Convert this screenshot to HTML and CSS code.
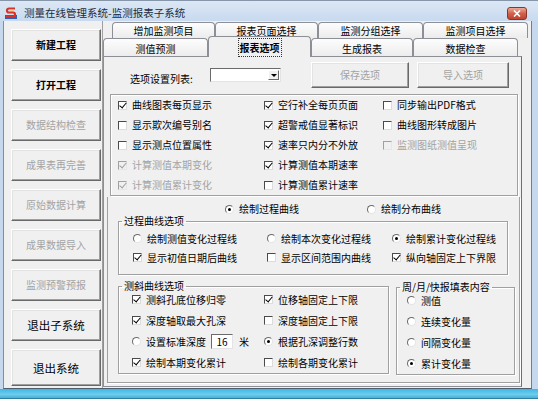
FILE: index.html
```html
<!DOCTYPE html>
<html lang="zh-CN">
<head>
  <meta charset="UTF-8" />
  <title>测量在线管理系统-监测报表子系统</title>
  <link rel="stylesheet" href="styles.css">
</head>
<body>
  <div class="window">
    <div class="titlebar">
      <svg class="appicon" width="12" height="12" viewBox="0 0 12 12">
        <rect x="0" y="8" width="12" height="4" fill="#2f5fb8"/>
        <path d="M10 1.5H4a2 2 0 0 0 0 4h4a2 2 0 0 1 0 4H1" fill="none" stroke="#d8322a" stroke-width="2.2"/>
        <path d="M9 3H4.5" stroke="#f4c430" stroke-width="1"/>
      </svg>
      <span class="title">测量在线管理系统-监测报表子系统</span>
      <span class="close">
        <svg width="8" height="7" viewBox="0 0 8 7"><path d="M1 0.5l6 6M7 0.5l-6 6" stroke="#fff" stroke-width="1.6"/></svg>
      </span>
    </div>

    <div class="frame">
      <div class="client">
        <!-- 左侧功能按钮 -->
        <div class="side">
          <button class="btn strong">新建工程</button>
          <button class="btn strong">打开工程</button>
          <button class="btn" disabled>数据结构检查</button>
          <button class="btn" disabled>成果表再完善</button>
          <button class="btn" disabled>原始数据计算</button>
          <button class="btn" disabled>成果数据导入</button>
          <button class="btn" disabled>监测预警预报</button>
          <button class="btn big">退出子系统</button>
          <button class="btn big last">退出系统</button>
        </div>

        <!-- 选项卡 -->
        <div class="tabctl">
          <div class="tabrow back">
            <div class="tab w103">增加监测项目</div>
            <div class="tab w103">报表页面选择</div>
            <div class="tab w105">监测分组选择</div>
            <div class="tab w105">监测项目选择</div>
          </div>
          <div class="tabrow front">
            <div class="tab w105">测值预测</div>
            <div class="tab w103 sel"><span class="focus">报表选项</span></div>
            <div class="tab w102">生成报表</div>
            <div class="tab w105">数据检查</div>
          </div>

          <div class="page">
            <div class="toolrow">
              <span class="lbl">选项设置列表:</span>
              <span class="combo"><span class="drop"></span></span>
              <button class="btn tool save" disabled>保存选项</button>
              <button class="btn tool load" disabled>导入选项</button>
            </div>

            <div class="opts">
              <label class="ck"><i class="box on"></i>曲线图表每页显示</label>
              <label class="ck"><i class="box on"></i>空行补全每页页面</label>
              <label class="ck"><i class="box"></i>同步输出PDF格式</label>

              <label class="ck"><i class="box"></i>显示欺次编号别名</label>
              <label class="ck"><i class="box on"></i>超警戒值显著标识</label>
              <label class="ck"><i class="box"></i>曲线图形转成图片</label>

              <label class="ck"><i class="box"></i>显示测点位置属性</label>
              <label class="ck"><i class="box on"></i>速率只内分不外放</label>
              <label class="ck off"><i class="box"></i>监测图纸测值呈现</label>

              <label class="ck off"><i class="box on"></i>计算测值本期变化</label>
              <label class="ck"><i class="box on"></i>计算测值本期速率</label>
              <span></span>

              <label class="ck off"><i class="box on"></i>计算测值累计变化</label>
              <label class="ck"><i class="box"></i>计算测值累计速率</label>
              <span></span>
            </div>

            <div class="lower">
              <div class="curverow">
                <label class="ck first"><i class="radio on"></i>绘制过程曲线</label>
                <label class="ck"><i class="radio"></i>绘制分布曲线</label>
              </div>

              <fieldset class="grp process">
                <legend>过程曲线选项</legend>
                <div class="pgrid">
                  <label class="ck"><i class="radio"></i>绘制测值变化过程线</label>
                  <label class="ck"><i class="radio"></i>绘制本次变化过程线</label>
                  <label class="ck"><i class="radio on"></i>绘制累计变化过程线</label>
                  <label class="ck"><i class="box on"></i>显示初值日期后曲线</label>
                  <label class="ck"><i class="box"></i>显示区间范围内曲线</label>
                  <label class="ck"><i class="box on"></i>纵向轴固定上下界限</label>
                </div>
              </fieldset>

              <div class="bottomrow">
                <fieldset class="grp incl">
                  <legend>测斜曲线选项</legend>
                  <div class="igrid">
                    <label class="ck"><i class="box on"></i>测斜孔底位移归零</label>
                    <label class="ck"><i class="box on"></i>位移轴固定上下限</label>
                    <label class="ck"><i class="box on"></i>深度轴取最大孔深</label>
                    <label class="ck"><i class="box"></i>深度轴固定上下限</label>
                    <label class="ck"><i class="radio"></i>设置标准深度<span class="num">16</span><span class="unit">米</span></label>
                    <label class="ck"><i class="radio on"></i>根据孔深调整行数</label>
                    <label class="ck"><i class="box on"></i>绘制本期变化累计</label>
                    <label class="ck"><i class="box"></i>绘制各期变化累计</label>
                  </div>
                </fieldset>

                <fieldset class="grp report">
                  <legend>周/月/快报填表内容</legend>
                  <div class="rgrid">
                    <label class="ck"><i class="radio"></i>测值</label>
                    <label class="ck"><i class="radio"></i>连续变化量</label>
                    <label class="ck"><i class="radio"></i>间隔变化量</label>
                    <label class="ck"><i class="radio on"></i>累计变化量</label>
                  </div>
                </fieldset>
              </div>
            </div>
          </div>
        </div>
      </div>
    </div>
    <div class="band"></div>
  </div>
</body>
</html>
```

FILE: styles.css
```css
* {
  box-sizing: border-box;
}

body {
  margin: 0;
  font-family: "Noto Sans CJK SC", "DejaVu Sans", sans-serif;
  font-size: 10px;
  line-height: 12px;
  color: #000;
  background: #c6d8ed;
}

.window {
  width: 538px;
  height: 399px;
  display: flex;
  flex-direction: column;
  overflow: hidden;
  background: #c6d8ed;
}

/* title bar */
.titlebar {
  height: 21px;
  flex: none;
  display: flex;
  align-items: center;
  padding-top: 4px;
  background: linear-gradient(#dce7f5, #c8daef);
  border-top: 1px solid #8696aa;
}

.appicon {
  margin-left: 5px;
}

.title {
  margin-left: 7px;
  font-size: 10.5px;
  color: #1e2a3a;
}

.close {
  margin-left: auto;
  margin-right: 11px;
  width: 20px;
  height: 13px;
  border: 1px solid #8a3526;
  border-radius: 3px;
  background: linear-gradient(#eeaa9a, #d1614c 50%, #c0432f);
  display: flex;
  align-items: center;
  justify-content: center;
}

.frame {
  flex: 1;
  display: flex;
  padding: 0 6px 0 3px;
}

.band {
  height: 10px;
  flex: none;
  background: linear-gradient(#3fb6e2, #6ccdef 60%, #49aed6);
  border-bottom: 1px solid #2d7fa3;
}

.client {
  flex: 1;
  display: flex;
  background: #f0f0f0;
  border-left: 1px solid #7f8ea0;
  border-right: 1px solid #6f7f92;
  border-bottom: 1px solid #4e5d6e;
}

/* left buttons */
.side {
  width: 99px;
  flex: none;
  display: flex;
  flex-direction: column;
  gap: 8px;
  padding: 8px 0 0 7px;
  border-right: 1px solid #a0a0a0;
}

.btn {
  font-family: inherit;
  font-size: 10px;
  line-height: 12px;
  color: #000;
  background: #f0f0f0;
  border: 1px solid;
  border-color: #fff #696969 #696969 #fff;
  box-shadow: inset -1px -1px 0 #a0a0a0, inset 1px 1px 0 #e3e3e3;
  padding: 0;
}

.side .btn {
  width: 90px;
  height: 32px;
  flex: none;
}

.btn.strong {
  font-weight: bold;
}

.btn.big {
  font-size: 11.5px;
}

.side .btn.last {
  height: 37px;
}

.btn:disabled {
  color: #a3a3a3;
}

/* tabs */
.tabctl {
  width: 428px;
  flex: none;
  display: flex;
  flex-direction: column;
}

.tabrow {
  display: flex;
}

.tabrow.back {
  margin-top: 1px;
  height: 16px;
  padding-left: 9px;
}

.tabrow.back .tab {
  padding-top: 2px;
}

.tabrow.front {
  height: 18px;
  position: relative;
  z-index: 1;
}

.tab {
  height: 100%;
  flex: none;
  text-align: center;
  padding-top: 4px;
  border: 1px solid #8c8f96;
  border-bottom: none;
  border-radius: 4px 4px 0 0;
  background: linear-gradient(#fdfdfd, #ececec);
}

.w102 { width: 102px; }
.w103 { width: 103px; }
.w105 { width: 105px; }

.tab.sel {
  height: 21px;
  margin-top: -2px;
  padding-top: 5px;
  background: #f0f0f0;
  font-weight: bold;
}

.focus {
  outline: 1px dotted #333;
  outline-offset: 1px;
}

.page {
  width: 419px;
  height: 331px;
  border: 1px solid #8c8f96;
  border-right-color: #6d6f74;
  background: #f0f0f0;
}

.toolrow {
  height: 26px;
  margin-top: 5px;
  padding-left: 26px;
  display: flex;
  align-items: center;
}

.lbl {
  width: 80px;
  padding-top: 7px;
}

.combo {
  width: 71px;
  height: 14px;
  border: 1px solid;
  border-color: #6b6b6b #e3e3e3 #e3e3e3 #6b6b6b;
  background: #fff;
  display: flex;
  justify-content: flex-end;
  padding: 1px;
}

.drop {
  width: 11px;
  height: 10px;
  background: #f0f0f0;
  border: 1px solid;
  border-color: #fff #696969 #696969 #fff;
  display: flex;
  align-items: center;
  justify-content: center;
}

.drop::after {
  content: "";
  border-left: 3px solid transparent;
  border-right: 3px solid transparent;
  border-top: 3px solid #000;
}

.btn.tool {
  height: 26px;
}

.btn.save {
  width: 98px;
  margin-left: 30px;
}

.btn.load {
  width: 92px;
  margin-left: 8px;
}

/* option group boxes */
.opts {
  margin: 6px 0 0 6px;
  width: 408px;
  height: 102px;
  display: grid;
  grid-template-columns: 146px 119px 1fr;
  grid-auto-rows: 20px;
  padding-left: 7px;
  border: 1px solid #a0a0a0;
  box-shadow: inset 1px 1px 0 #fff, 1px 1px 0 #fff;
}

.ck {
  display: flex;
  align-items: center;
  white-space: nowrap;
}

.ck.off {
  color: #a3a3a3;
}

.box {
  width: 9px;
  height: 9px;
  flex: none;
  margin-right: 5px;
  position: relative;
  background: #fff;
  border: 1px solid;
  border-color: #4a4a4a #dcdcdc #dcdcdc #4a4a4a;
}

.box.on::after {
  content: "";
  position: absolute;
  left: 2px;
  top: -1px;
  width: 3px;
  height: 6px;
  border: solid #000;
  border-width: 0 1.5px 1.5px 0;
  transform: rotate(40deg);
}

.ck.off .box {
  background: #f0f0f0;
  border-color: #a0a0a0 #e6e6e6 #e6e6e6 #a0a0a0;
}

.ck.off .box.on::after {
  border-color: #a0a0a0;
}

.radio {
  width: 9px;
  height: 9px;
  flex: none;
  margin-right: 5px;
  border-radius: 50%;
  background: #fff;
  border: 1px solid;
  border-color: #6a6a6a #e4e4e4 #e4e4e4 #6a6a6a;
  display: flex;
  align-items: center;
  justify-content: center;
}

.radio.on::after {
  content: "";
  width: 3px;
  height: 3px;
  border-radius: 50%;
  background: #000;
}

.lower {
  margin: 1px 1px 0 3px;
  width: 413px;
  height: 186px;
  border: 1px solid #a0a0a0;
  border-top: none;
  box-shadow: 1px 1px 0 #fff;
}

.curverow {
  height: 18px;
  padding: 6px 0 0 117px;
  display: flex;
}

.curverow .first {
  width: 142px;
}

.grp {
  margin: 0;
  padding: 0;
  border: 1px solid #a0a0a0;
  box-shadow: inset 1px 1px 0 #fff, 1px 1px 0 #fff;
  min-width: 0;
}

.grp legend {
  margin-left: 3px;
  padding: 0 2px;
  line-height: 12px;
}

.process {
  margin-left: 10px;
  width: 390px;
}

.pgrid {
  display: grid;
  grid-template-columns: 134px 125px 1fr;
  grid-auto-rows: 19px;
  padding: 2px 0 7px 14px;
}

.bottomrow {
  display: flex;
  align-items: flex-start;
  margin: 5px 0 0 10px;
}

.incl {
  width: 271px;
}

.igrid {
  display: grid;
  grid-template-columns: 132px 1fr;
  grid-auto-rows: 21px;
  margin-top: -3px;
  padding-left: 13px;
}

.num {
  width: 22px;
  height: 15px;
  margin-left: 5px;
  background: #fff;
  border: 1px solid;
  border-color: #6b6b6b #e3e3e3 #e3e3e3 #6b6b6b;
  text-align: center;
  line-height: 13px;
}

.unit {
  margin-left: 6px;
}

.report {
  width: 119px;
  margin-left: 7px;
  margin-top: 2px;
}

.report legend {
  line-height: 10px;
}

.rgrid {
  display: grid;
  grid-auto-rows: 21px;
  margin-top: -2px;
  padding-left: 10px;
}
```
